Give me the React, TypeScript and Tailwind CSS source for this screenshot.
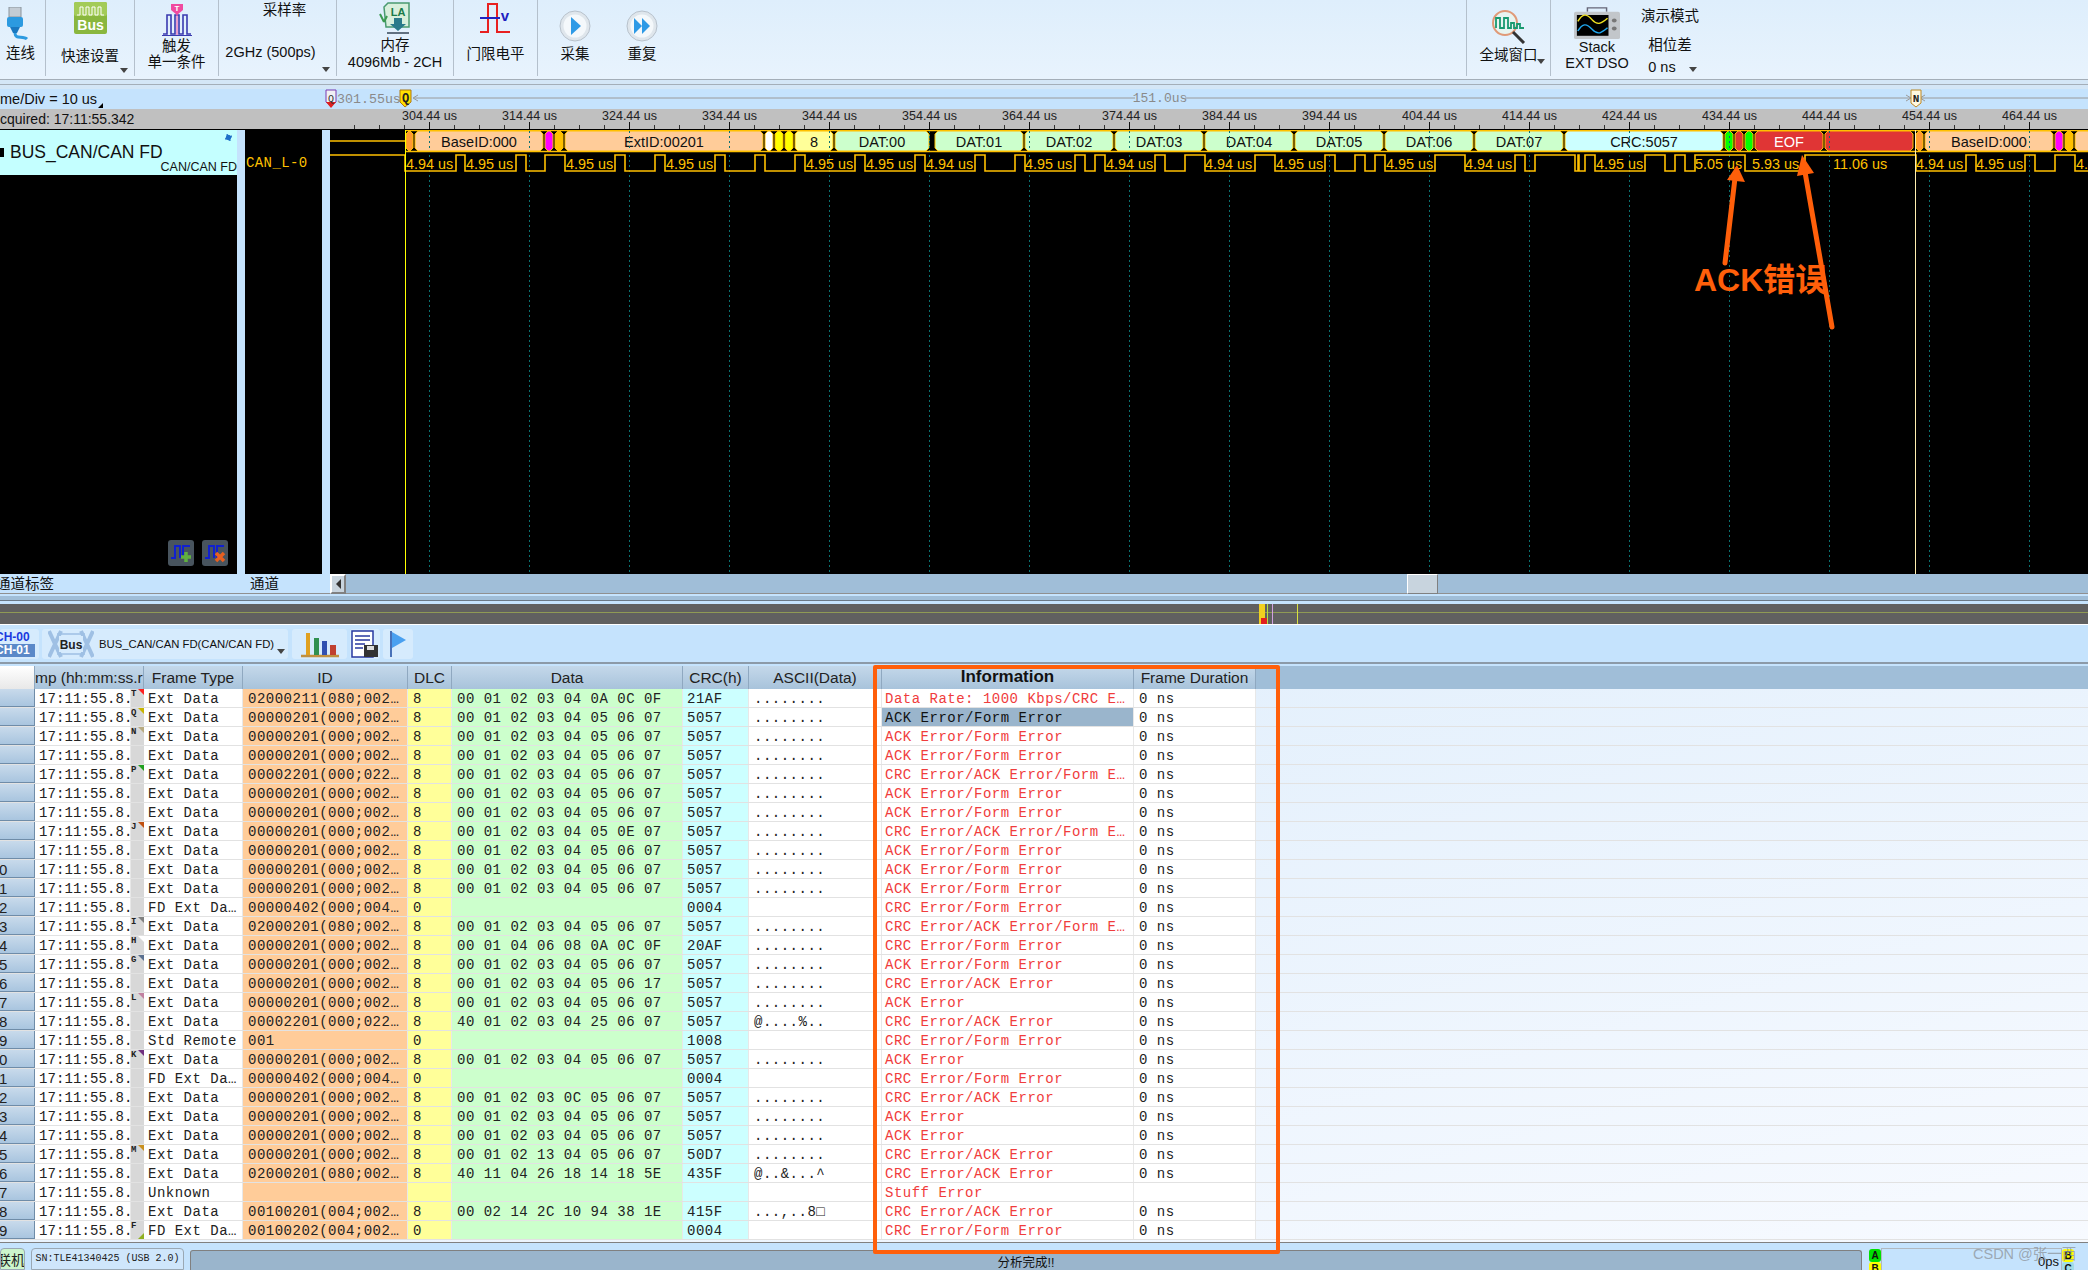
const sans = "font-['Liberation_Sans','Noto_Sans_CJK_SC',sans-serif]";
const mono = "font-['Liberation_Mono','Noto_Sans_CJK_SC',monospace]";

const A_F = "ACK Error/Form Error";
const C_A_F = "CRC Error/ACK Error/Form E…";
const C_F = "CRC Error/Form Error";
const C_A = "CRC Error/ACK Error";
const ACK = "ACK Error";
const BYTES = "00 01 02 03 04 05 06 07";
const ID1 = "00000201(000;002…";

type Row = {
  type?: string;
  id?: string;
  dlc?: string;
  data?: string;
  crc?: string;
  ascii?: string;
  info: string;
  dur?: string;
  flag?: string;
  flagColor?: string;
};

const rows: Row[] = [
  { id: "02000211(080;002…", data: "00 01 02 03 04 0A 0C 0F", crc: "21AF", info: "Data Rate: 1000 Kbps/CRC E…", flag: "T", flagColor: "border-t-[#ff2020]" },
  { info: A_F, flag: "Q", flagColor: "border-t-[#c8b400]" },
  { info: A_F, flag: "N", flagColor: "border-t-[#b8aa80]" },
  { info: A_F },
  { id: "00002201(000;022…", info: C_A_F, flag: "P", flagColor: "border-t-[#20a020]" },
  { info: A_F },
  { info: A_F },
  { data: "00 01 02 03 04 05 0E 07", info: C_A_F, flag: "J", flagColor: "border-t-[#c05010]" },
  { info: A_F },
  { info: A_F },
  { info: A_F },
  { type: "FD Ext Da…", id: "00000402(000;004…", dlc: "0", data: "", crc: "0004", ascii: "", info: C_F },
  { id: "02000201(080;002…", info: C_A_F, flag: "I", flagColor: "border-t-[#808080]" },
  { data: "00 01 04 06 08 0A 0C 0F", crc: "20AF", info: C_F, flag: "H", flagColor: "border-t-[#ffffff]" },
  { info: A_F, flag: "G", flagColor: "border-t-[#5a7090]" },
  { data: "00 01 02 03 04 05 06 17", info: C_A },
  { info: ACK, flag: "L", flagColor: "border-t-[#c080a0]" },
  { id: "00002201(000;022…", data: "40 01 02 03 04 25 06 07", ascii: "@....%..", info: C_A },
  { type: "Std Remote", id: "001", dlc: "0", data: "", crc: "1008", ascii: "", info: C_F },
  { info: ACK, flag: "K", flagColor: "border-t-[#703080]" },
  { type: "FD Ext Da…", id: "00000402(000;004…", dlc: "0", data: "", crc: "0004", ascii: "", info: C_F },
  { data: "00 01 02 03 0C 05 06 07", info: C_A },
  { info: ACK },
  { info: ACK },
  { data: "00 01 02 13 04 05 06 07", crc: "50D7", info: C_A, flag: "M", flagColor: "border-t-[#c89020]" },
  { id: "02000201(080;002…", data: "40 11 04 26 18 14 18 5E", crc: "435F", ascii: "@..&...^", info: C_A },
  { type: "Unknown", id: "", dlc: "", data: "", crc: "", ascii: "", info: "Stuff Error", dur: "" },
  { id: "00100201(004;002…", data: "00 02 14 2C 10 94 38 1E", crc: "415F", ascii: "...,..8□", info: C_A },
  { type: "FD Ext Da…", id: "00100202(004;002…", dlc: "0", data: "", crc: "0004", ascii: "", info: C_F, flag: "F" },
];

// decode bar, page coordinates
const segments = [
  { x1: 406, x2: 413, fill: "#ff9933" },
  { x1: 415, x2: 543, fill: "#ffcc99", label: "BaseID:000" },
  { x1: 545, x2: 553, fill: "#ff00ff" },
  { x1: 555, x2: 563, fill: "#ffc000" },
  { x1: 565, x2: 763, fill: "#ffcc99", label: "ExtID:00201" },
  { x1: 765, x2: 773, fill: "#ffffff" },
  { x1: 775, x2: 783, fill: "#ffff00" },
  { x1: 785, x2: 793, fill: "#ffff00" },
  { x1: 795, x2: 833, fill: "#ffff99", label: "8" },
  { x1: 835, x2: 929, fill: "#ccffcc", label: "DAT:00" },
  { x1: 935, x2: 1023, fill: "#ccffcc", label: "DAT:01" },
  { x1: 1025, x2: 1113, fill: "#ccffcc", label: "DAT:02" },
  { x1: 1115, x2: 1203, fill: "#ccffcc", label: "DAT:03" },
  { x1: 1205, x2: 1293, fill: "#ccffcc", label: "DAT:04" },
  { x1: 1295, x2: 1383, fill: "#ccffcc", label: "DAT:05" },
  { x1: 1385, x2: 1473, fill: "#ccffcc", label: "DAT:06" },
  { x1: 1475, x2: 1563, fill: "#ccffcc", label: "DAT:07" },
  { x1: 1565, x2: 1723, fill: "#ccffff", label: "CRC:5057" },
  { x1: 1725, x2: 1733, fill: "#00ff00" },
  { x1: 1735, x2: 1743, fill: "#e03535" },
  { x1: 1745, x2: 1753, fill: "#00ff00" },
  { x1: 1755, x2: 1823, fill: "#e03535", label: "EOF", light: true },
  { x1: 1825, x2: 1913, fill: "#e03535" },
  { x1: 1916, x2: 1923, fill: "#ff9933" },
  { x1: 1925, x2: 2053, fill: "#ffcc99", label: "BaseID:000" },
  { x1: 2055, x2: 2063, fill: "#ff00ff" },
  { x1: 2065, x2: 2073, fill: "#ffc000" },
  { x1: 2075, x2: 2095, fill: "#ffcc99" },
];

const toggles = [
  405, 456, 465, 516, 526, 545, 565, 615, 625, 655, 665, 715, 725, 755, 765, 795, 805, 855, 865, 915, 925, 975, 985,
  1015, 1025, 1075, 1085, 1095, 1105, 1155, 1165, 1185, 1205, 1255, 1275, 1325, 1335, 1355, 1365, 1375, 1385, 1435,
  1465, 1515, 1525, 1535, 1575, 1578, 1579, 1585, 1595, 1645, 1665, 1675, 1685, 1695, 1745, 1805, 1916, 1966, 1976,
  2025, 2035, 2055, 2075,
];

const waveLabels: [number, string][] = [
  [406, "4.94 us"], [466, "4.95 us"], [566, "4.95 us"], [666, "4.95 us"], [806, "4.95 us"], [866, "4.95 us"],
  [926, "4.94 us"], [1025, "4.95 us"], [1106, "4.94 us"], [1205, "4.94 us"], [1276, "4.95 us"], [1386, "4.95 us"],
  [1465, "4.94 us"], [1596, "4.95 us"], [1695, "5.05 us"], [1752, "5.93 us"], [1833, "11.06 us"], [1916, "4.94 us"],
  [1976, "4.95 us"], [2076, "4.95 us"],
];

const grid = Array.from({ length: 17 }, (_, i) => 429.5 + i * 100);
const ticks = Array.from({ length: 68 }, (_, i) => 354.5 + i * 25);

function wavePath() {
  let d = "M330 155 H405";
  let high = true;
  toggles.forEach((x) => {
    d += ` H${x} V${high ? 171 : 155}`;
    high = !high;
  });
  return d + " H2088";
}

function Caret({ className }: { className: string }) {
  return <div className={`absolute w-0 h-0 border-x-[4px] border-x-transparent border-t-[5px] border-t-[#444] ${className}`} />;
}

function UsbIcon() {
  return (
    <svg width="24" height="34" viewBox="0 0 24 34">
      <rect x="4" y="0" width="12" height="10" fill="#c4ccd4" stroke="#8a949c" />
      <rect x="2" y="10" width="16" height="10" rx="2" fill="#2c9ae0" />
      <path d="M5 20 L15 20 L12 26 L8 26 Z" fill="#1a78c0" />
      <path d="M10 26 C10 33 18 28 22 32" stroke="#2c9ae0" strokeWidth="3" fill="none" />
    </svg>
  );
}

function BusIcon() {
  return (
    <svg width="33" height="32" viewBox="0 0 33 32">
      <rect width="33" height="32" rx="2" fill="#8ab73e" />
      <rect width="33" height="14" rx="2" fill="#a3cb58" />
      <path d="M3 13 H6 V5 H9 V13 H12 V5 H15 V13 H18 V5 H21 V13 H24 V5 H27 V13 H30" stroke="#fff" strokeWidth="1" fill="none" />
      <text x="16.5" y="28" textAnchor="middle" fontSize="14" fontWeight="700" fill="#fff" fontFamily="Liberation Sans">Bus</text>
    </svg>
  );
}

function TriggerIcon() {
  return (
    <svg width="30" height="33" viewBox="0 0 30 33">
      <path d="M1 30 H5 V11 H9 V30 H13 V11 H17 V30 H21 V11 H25 V30 H29" stroke="#3a3ab0" strokeWidth="1.6" fill="none" />
      <path d="M0 31.5 H30" stroke="#3a3ab0" strokeWidth="1" />
      <path d="M9 0 H21 V6 L15 11 L9 6 Z" fill="#f04aa0" />
      <path d="M15 10 V31" stroke="#f04aa0" strokeWidth="1" />
      <text x="15" y="7" textAnchor="middle" fontSize="8" fontWeight="700" fill="#fff" fontFamily="Liberation Sans">T</text>
    </svg>
  );
}

function MemoryIcon() {
  return (
    <svg width="32" height="33" viewBox="0 0 32 33">
      <path d="M5 5 L9 1 H30 V25 H7 Z" fill="#d8efdc" stroke="#4a9a70" strokeWidth="1.5" />
      <path d="M1 12 L5 20 M5 20 L8 14" stroke="#3a9a50" strokeWidth="2" fill="none" />
      <text x="19" y="14" textAnchor="middle" fontSize="11" fontWeight="700" fill="#1a7a4a" fontFamily="Liberation Sans">LA</text>
      <path d="M15 16 H23 V22 H27 L19 29 L11 22 H15 Z" fill="#2a7a8a" />
      <path d="M8 31 H30" stroke="#607080" strokeWidth="2" />
    </svg>
  );
}

function ThresholdIcon() {
  return (
    <svg width="32" height="32" viewBox="0 0 32 32">
      <path d="M0 30 H8 V2 H17 V30 H30" stroke="#e82020" strokeWidth="2" fill="none" />
      <path d="M0 16 H20" stroke="#2020c0" strokeWidth="2" />
      <text x="25" y="19" textAnchor="middle" fontSize="15" fontWeight="700" fill="#2020c0" fontFamily="Liberation Sans">v</text>
    </svg>
  );
}

function PlayIcon({ double }: { double?: boolean }) {
  return (
    <svg width="32" height="32" viewBox="0 0 32 32">
      <circle cx="16" cy="16" r="15" fill="#dfe6ec" stroke="#b8c2cc" />
      <circle cx="16" cy="16" r="11.5" fill="#f4f8fb" />
      {double ? (
        <path d="M8 8 L16 16 L8 24 Z M16 8 L24 16 L16 24 Z" fill="#2e9ae6" />
      ) : (
        <path d="M12 7 L22 16 L12 25 Z" fill="#2e9ae6" />
      )}
    </svg>
  );
}

function ZoomIcon() {
  return (
    <svg width="34" height="34" viewBox="0 0 34 34">
      <circle cx="13" cy="13" r="12" fill="#e8f4f0" stroke="#e09a78" strokeWidth="2" />
      <path d="M4 18 V8 H8 V18 H12 V8 H16 V18 H19 V13 H22 V18 H25 V14 H28 V18 H32" stroke="#1a9a70" strokeWidth="1.8" fill="none" />
      <path d="M21 22 L32 33" stroke="#333" strokeWidth="3" />
    </svg>
  );
}

function StackIcon() {
  return (
    <svg width="46" height="32" viewBox="0 0 48 40" preserveAspectRatio="none">
      <path d="M14 6 V1 H34 V6" stroke="#667" strokeWidth="1.5" fill="none" />
      <rect x="0" y="6" width="48" height="34" rx="2" fill="#c2c6ca" />
      <rect x="3" y="10" width="33" height="26" fill="#000" />
      <path d="M4 18 C9 8 13 8 19 16 C25 24 29 20 35 14" stroke="#f0e020" strokeWidth="1.6" fill="none" />
      <path d="M4 30 C9 20 13 20 19 28 C25 36 29 32 35 26" stroke="#20a8f0" strokeWidth="1.6" fill="none" />
      <circle cx="42" cy="17" r="2.5" fill="#777" />
      <circle cx="42" cy="27" r="2.5" fill="#777" />
    </svg>
  );
}

function Toolbar() {
  const section = "relative h-[76px] shrink-0 flex flex-col items-center border-r border-[#b4c0cc] text-[14.5px] leading-[16px] text-[#111]";
  return (
    <div className="h-[79px] flex bg-gradient-to-b from-[#deeefc] to-[#e8f3fd]">
      <div className={`${section} w-[46px] pt-[7px] pr-[12px]`}>
        <UsbIcon />
        <span className="mt-[4px] ml-[8px] whitespace-nowrap">连线</span>
      </div>
      <div className={`${section} w-[89px] pt-[2px]`}>
        <BusIcon />
        <span className="mt-[14px]">快速设置</span>
        <Caret className="left-[74px] top-[68px]" />
      </div>
      <div className={`${section} w-[84px] pt-[4px]`}>
        <TriggerIcon />
        <span className="mt-[1px]">触发</span>
        <span>单一条件</span>
      </div>
      <div className={`${section} w-[118px] pt-[2px] pr-[14px]`}>
        <span className="ml-[28px]">采样率</span>
        <span className="mt-[26px] whitespace-nowrap">2GHz (500ps)</span>
        <Caret className="left-[103px] top-[67px]" />
      </div>
      <div className={`${section} w-[117px] pt-[2px]`}>
        <MemoryIcon />
        <span className="mt-[2px]">内存</span>
        <span className="mt-[1px] whitespace-nowrap">4096Mb - 2CH</span>
      </div>
      <div className={`${section} w-[84px] pt-[2px]`}>
        <ThresholdIcon />
        <span className="mt-[12px]">门限电平</span>
      </div>
      <div className={`${section} w-[74px] pt-[10px] border-r-0`}>
        <PlayIcon />
        <span className="mt-[4px]">采集</span>
      </div>
      <div className={`${section} w-[60px] pt-[10px] border-r-0`}>
        <PlayIcon double />
        <span className="mt-[4px]">重复</span>
      </div>
      <div className="flex-1 h-[76px] border-r border-[#b4c0cc]" />
      <div className={`${section} w-[84px] pt-[10px]`}>
        <ZoomIcon />
        <span className="mt-[3px] whitespace-nowrap">全域窗口</span>
        <Caret className="left-[70px] top-[59px]" />
      </div>
      <div className={`${section} w-[89px] pt-[7px] pl-[3px] border-r-0`}>
        <StackIcon />
        <span>Stack</span>
        <span className="whitespace-nowrap">EXT DSO</span>
      </div>
      <div className={`${section} w-[60px] pt-[8px] border-r-0`}>
        <span className="whitespace-nowrap">演示模式</span>
        <span className="mt-[13px]">相位差</span>
        <span className="mt-[6px] mr-[16px] whitespace-nowrap">0 ns</span>
        <Caret className="left-[49px] top-[67px]" />
      </div>
      <div className="w-[388px]" />
    </div>
  );
}

function TimeRow() {
  return (
    <div className="relative h-[20px] bg-[#c5e3fd] text-[14.5px] leading-[20px] text-[#111]">
      <span className="whitespace-nowrap">me/Div = 10 us</span>
      <div className="absolute left-[98px] top-[14px] w-0 h-0 border-l-[5px] border-l-transparent border-b-[5px] border-b-black" />
      <svg className="absolute inset-0" width="2088" height="20" viewBox="0 89 2088 20">
        <path d="M414 98 H1910 M1921 98 H2088" stroke="#9a9a9a" />
        <path d="M418 95 L413 98 L418 101 M1906 95 L1911 98 L1906 101 M1925 95 L1920 98 L1925 101" stroke="#9a9a9a" fill="none" />
        <rect x="1135" y="91" width="50" height="14" fill="#c5e3fd" />
        <text x="1160" y="102" textAnchor="middle" fontSize="13" fill="#8a8a8a" fontFamily="Liberation Mono">151.0us</text>
        <text x="337" y="103" fontSize="13.3" fill="#8a8a8a" fontFamily="Liberation Mono">301.55us</text>
        <path d="M326 90 H336 V102 L331 106 L326 102 Z" fill="#f0f0f4" stroke="#7a3ab0" />
        <path d="M326 102 H336 L331 108 Z" fill="#e02020" />
        <text x="331" y="102" textAnchor="middle" fontSize="10" fill="#333" fontFamily="Liberation Mono">Q</text>
        <path d="M400 90 H411 V102 L405 107 L400 102 Z" fill="#ffe000" stroke="#b07810" />
        <text x="405.5" y="102" textAnchor="middle" fontSize="12" fontWeight="700" fill="#222" fontFamily="Liberation Mono">Q</text>
        <path d="M1911 90 H1921 V103 L1916 107 L1911 103 Z" fill="#fff8e0" stroke="#c08820" />
        <text x="1916" y="102" textAnchor="middle" fontSize="11" fontWeight="700" fill="#222" fontFamily="Liberation Mono">N</text>
      </svg>
    </div>
  );
}

function RulerRow() {
  return (
    <div className="flex h-[21px] bg-[#c0c0c0] border-b border-black">
      <div className="w-[330px] shrink-0 text-[14px] leading-[20px] text-[#111] whitespace-nowrap">cquired: 17:11:55.342</div>
      <svg width="1758" height="20" viewBox="330 109 1758 20">
        {ticks.map((x) => (
          <path key={x} d={`M${x} 125 V129`} stroke="#333" />
        ))}
        {grid.map((x, i) => (
          <g key={x}>
            <path d={`M${x} 122 V129`} stroke="#111" />
            <text x={x} y="120" textAnchor="middle" fontSize="12.5" fill="#222" fontFamily="Liberation Sans">
              {(304.44 + i * 10).toFixed(2)} us
            </text>
          </g>
        ))}
      </svg>
    </div>
  );
}

function Waveform() {
  return (
    <svg width="1758" height="444" viewBox="330 130 1758 444" className="bg-black shrink-0">
      {grid.map((x) => (
        <path key={x} d={`M${x} 130 V574`} stroke="#0a7070" strokeDasharray="2 3" />
      ))}
      <path d="M330 141 H405" stroke="#ffc000" strokeWidth="1.5" />
      <path d="M405 130.5 H2088 M405 151.5 H2088" stroke="#ffc000" strokeWidth="1.5" />
      {segments.map((s) => (
        <g key={s.x1}>
          <path
            d={`M${s.x1 + 3} 131 H${s.x2 - 3} L${s.x2} 134 V148 L${s.x2 - 3} 151 H${s.x1 + 3} L${s.x1} 148 V134 Z`}
            fill={s.fill}
            stroke="#ffc000"
          />
          {s.label && (
            <text
              x={(s.x1 + s.x2) / 2}
              y="146.5"
              textAnchor="middle"
              fontSize="14.5"
              fill={s.light ? "#fff" : "#111"}
              fontFamily="Liberation Sans"
            >
              {s.label}
            </text>
          )}
        </g>
      ))}
      {grid.map((x) => (
        <path key={`g${x}`} d={`M${x} 131 V151`} stroke="#0a7070" strokeDasharray="2 3" />
      ))}
      <path d={wavePath()} stroke="#ffc000" strokeWidth="1.6" fill="none" />
      {waveLabels.map(([x, t]) => (
        <text key={x} x={x} y="169" fontSize="14.4" fill="#ffc000" fontFamily="Liberation Sans">
          {t}
        </text>
      ))}
      <path d="M405.5 130 V574" stroke="#ffff00" />
      <path d="M1915.5 130 V574" stroke="#ffefb0" />
    </svg>
  );
}

function PulseButton({ mark }: { mark: "plus" | "cross" }) {
  return (
    <svg width="26" height="26" viewBox="0 0 26 26">
      <rect width="26" height="26" rx="3" fill="#48545e" />
      <path d="M3 18 H7 V6 H12 V18 M15 18 V6 H22" stroke="#1020d0" strokeWidth="2" fill="none" />
      {mark === "plus" ? (
        <path d="M18 12 V22 M13 17 H23" stroke="#60b040" strokeWidth="3.5" />
      ) : (
        <path d="M14 13 L22 21 M22 13 L14 21" stroke="#e86020" strokeWidth="3.5" />
      )}
    </svg>
  );
}

function ChannelPanel() {
  return (
    <div className="flex h-[444px]">
      <div className="relative w-[237px] shrink-0 bg-black">
        <div className="relative h-[45px] bg-[#c4ffff] text-[#111]">
          <div className="absolute left-0 top-[18px] w-[4px] h-[9px] bg-black" />
          <span className="absolute left-[10px] top-[11px] text-[17.5px] leading-[22px] whitespace-nowrap">BUS_CAN/CAN FD</span>
          <span className="absolute right-0 top-[29px] text-[12.5px] leading-[16px] whitespace-nowrap">CAN/CAN FD</span>
          <div className="absolute right-[5px] top-[4px] w-[7px] h-[7px] rounded-full bg-[#1e6fc8] border border-dashed border-[#c4ffff]" />
        </div>
        <div className="absolute left-[168px] top-[410px] flex gap-[8px]">
          <PulseButton mark="plus" />
          <PulseButton mark="cross" />
        </div>
      </div>
      <div className="w-[8px] shrink-0 bg-[#c5e3fd]" />
      <div className={`w-[77px] shrink-0 bg-black pt-[24px] pl-[1px] text-[14px] leading-[18px] tracking-[0.4px] text-[#ffc000] ${mono}`}>
        CAN_L-0
      </div>
      <div className="w-[8px] shrink-0 bg-[#c5e3fd]" />
      <Waveform />
    </div>
  );
}

function ScrollRow() {
  return (
    <>
      <div className="flex h-[20px] bg-[#a0bed8] border-b border-[#909090]">
        <div className="relative w-[330px] shrink-0 bg-[#c5e3fd] text-[14.5px] leading-[20px] text-[#111] overflow-hidden">
          <span className="absolute left-[-4px] whitespace-nowrap">通道标签</span>
          <span className="absolute left-[250px]">通道</span>
        </div>
        <div className="w-[16px] h-[20px] shrink-0 flex items-center justify-center bg-[#c8d4de] border-2 border-t-white border-l-white border-r-[#808080] border-b-[#808080]">
          <div className="w-0 h-0 border-y-[5px] border-y-transparent border-r-[5px] border-r-[#333]" />
        </div>
        <div className="flex-1 pl-[1061px]">
          <div className="w-[31px] h-[20px] bg-[#c8d4de] border border-t-white border-l-white border-r-[#808080] border-b-[#808080]" />
        </div>
      </div>
      <div className="h-[2px] bg-[#c5e3fd]" />
      <div className="h-[5px] bg-[#a0bed8] border-b border-[#6a7886]" />
      <div className="h-[3px] bg-[#c5e3fd]" />
      <div className="relative h-[20px] bg-[#606060]">
        <div className="absolute inset-x-0 top-[8px] h-px bg-[#8f9a55]" />
        <div className="absolute left-[1259px] top-0 w-[6px] h-[20px] bg-[#f0d020]" />
        <div className="absolute left-[1261px] top-[14px] w-[6px] h-[6px] bg-[#e02020]" />
        <div className="absolute left-[1267px] top-0 w-px h-[20px] bg-[#b0e040]" />
        <div className="absolute left-[1272px] top-0 w-px h-[20px] bg-[#d0a0e0]" />
        <div className="absolute left-[1297px] top-0 w-px h-[20px] bg-[#d8e040]" />
      </div>
      <div className="h-px bg-white" />
    </>
  );
}

function TableToolbar() {
  const btn = "h-[30px] shrink-0 rounded-[3px] bg-[#d6ebfd] flex items-center";
  return (
    <div className="h-[39px] bg-[#c5e3fd] border-b-2 border-[#8c9aa8] flex gap-[3px] pt-[4px]">
      <div className={`${btn} w-[39px] flex-col items-start overflow-hidden justify-center text-[12px] leading-[13px] font-bold ${sans}`}>
        <span className="ml-[-5px] text-[#1a3ae0] whitespace-nowrap">CH-00</span>
        <span className="w-[35px] bg-[#5a88c8] text-white whitespace-nowrap overflow-hidden">
          <span className="ml-[-5px] inline-block">CH-01</span>
        </span>
      </div>
      <div className={`${btn} relative w-[246px]`}>
        <svg width="46" height="30" viewBox="0 0 46 30" className="ml-[6px]">
          <path d="M1 2 L13 28 M1 28 L13 2 M33 28 L45 2 M33 2 L45 28" stroke="#9fc0e4" strokeWidth="4" fill="none" />
          <path d="M9 5 H37 M9 25 H37" stroke="#9fc0e4" strokeWidth="1.5" />
          <rect x="11" y="7" width="24" height="16" fill="#d6ebfd" />
          <text x="23" y="20" textAnchor="middle" fontSize="12" fontWeight="700" fill="#222" fontFamily="Liberation Sans">Bus</text>
        </svg>
        <span className="ml-[5px] text-[11.3px] text-[#111] whitespace-nowrap">BUS_CAN/CAN FD(CAN/CAN FD)</span>
        <Caret className="left-[235px] top-[20px]" />
      </div>
      <div className={`${btn} w-[55px] ml-[1px] justify-center`}>
        <svg width="40" height="30" viewBox="0 0 40 30">
          <path d="M1 27 H39" stroke="#c09040" strokeWidth="2.5" />
          <rect x="6" y="4" width="4" height="22" fill="#e0a020" />
          <rect x="14" y="9" width="5" height="17" fill="#309050" />
          <rect x="22" y="12" width="5" height="14" fill="#3050b0" />
          <rect x="30" y="16" width="6" height="10" fill="#c04030" />
        </svg>
      </div>
      <div className={`${btn} w-[30px] justify-center`}>
        <svg width="28" height="28" viewBox="0 0 28 28">
          <rect x="1" y="1" width="21" height="26" fill="#fff" stroke="#2838a0" strokeWidth="1.5" />
          <path d="M4 6 H19 M4 10 H19 M4 14 H14 M4 18 H12" stroke="#2838a0" strokeWidth="1.5" />
          <rect x="13" y="15" width="14" height="12" fill="#333" />
          <rect x="16" y="16" width="7" height="4" fill="#ddd" />
        </svg>
      </div>
      <div className={`${btn} w-[30px] justify-center`}>
        <svg width="20" height="28" viewBox="0 0 20 28">
          <path d="M3 1 V27" stroke="#1848a0" strokeWidth="1.5" />
          <path d="M4 2 L18 10 L4 18 Z" fill="#4aa0f0" />
        </svg>
      </div>
    </div>
  );
}

const cols = {
  time: "w-[96px]",
  flag: "w-[13px]",
  type: "w-[99px]",
  id: "w-[165px]",
  dlc: "w-[44px]",
  data: "w-[231px]",
  crc: "w-[66px]",
  ascii: "w-[133px]",
  info: "w-[252px]",
  dur: "w-[122px]",
};

function HeaderCell({ w, children, bold }: { w: string; children: string; bold?: boolean }) {
  return (
    <div
      className={`${w} shrink-0 overflow-hidden whitespace-nowrap border-r border-[#8fa8c0] text-center ${
        bold ? "text-[17px] font-bold text-[#111] leading-[21px]" : "text-[15.5px] text-[#222] leading-[23px]"
      }`}
    >
      {children}
    </div>
  );
}

function Cell({ w, bg, className, children }: { w: string; bg: string; className?: string; children?: React.ReactNode }) {
  return (
    <div className={`${w} ${bg} shrink-0 overflow-hidden whitespace-nowrap border-r border-[#e8e8e8] ${className ?? ""}`}>
      {children}
    </div>
  );
}

function TableRow({ row, index }: { row: Row; index: number }) {
  const selected = index === 1;
  const num = index + 1;
  return (
    <div className={`flex h-[19px] shrink-0 border-b border-[#e2e2e2] text-[14px] leading-[20px] tracking-[0.5px] text-[#222] ${mono}`}>
      <div className={`w-[35px] shrink-0 bg-gradient-to-b from-[#c8daeb] to-[#a9c5df] border-r border-b border-[#6f8ca8] text-[15px] leading-[19px] tracking-normal overflow-hidden ${sans}`}>
        <span className="ml-[-1px] inline-block">{num >= 10 ? num % 10 : ""}</span>
      </div>
      <Cell w={cols.time} bg="bg-white" className="pl-[4px] tracking-[0.1px]">17:11:55.8.</Cell>
      <div className={`${cols.flag} relative shrink-0 bg-[#d8d8d8] overflow-hidden`}>
        {row.flag && <span className="absolute left-0 top-[-2px] text-[9px] leading-[14px] tracking-normal font-bold">{row.flag}</span>}
        {row.flagColor && <div className={`absolute right-0 top-0 w-0 h-0 border-l-[6px] border-l-transparent border-t-[6px] ${row.flagColor}`} />}
        {row.flag === "F" && <div className="absolute right-0 bottom-0 w-0 h-0 border-l-[6px] border-l-transparent border-b-[6px] border-b-[#90b020]" />}
      </div>
      <Cell w={cols.type} bg="bg-white" className="pl-[4px]">{row.type ?? "Ext Data"}</Cell>
      <Cell w={cols.id} bg="bg-[#ffcc99]" className="pl-[5px]">{row.id ?? ID1}</Cell>
      <Cell w={cols.dlc} bg="bg-[#ffff99]" className="pl-[5px]">{row.dlc ?? "8"}</Cell>
      <Cell w={cols.data} bg="bg-[#ccffcc]" className="pl-[5px]">{row.data ?? BYTES}</Cell>
      <Cell w={cols.crc} bg="bg-[#ccffff]" className="pl-[4px]">{row.crc ?? "5057"}</Cell>
      <Cell w={cols.ascii} bg="bg-white" className="pl-[5px]">{row.ascii ?? "........"}</Cell>
      <Cell
        w={cols.info}
        bg={selected ? "bg-[#9ab5cc]" : "bg-white"}
        className={`pl-[3px] ${selected ? "text-[#111]" : "text-[#f03c3c]"}`}
      >
        {row.info}
      </Cell>
      <Cell w={cols.dur} bg="bg-white" className="pl-[5px]">{row.dur ?? "0 ns"}</Cell>
    </div>
  );
}

function DataTable() {
  return (
    <div className="flex-1 flex flex-col bg-gradient-to-br from-[#dcecfb] to-[#f7faff]">
      <div className="flex h-[23px] bg-[#a0bed8] shrink-0">
        <div className="w-[35px] shrink-0 bg-gradient-to-b from-white to-[#e8e8e8] border-r border-[#8fa8c0]" />
        <div className="flex bg-gradient-to-b from-[#c4d8ea] to-[#a8c3db]">
          <div className="w-[109px] shrink-0 overflow-hidden whitespace-nowrap border-r border-[#8fa8c0] text-[15.5px] leading-[23px] text-[#222]">mp (hh:mm:ss.r</div>
          <HeaderCell w={cols.type}>Frame Type</HeaderCell>
          <HeaderCell w={cols.id}>ID</HeaderCell>
          <HeaderCell w={cols.dlc}>DLC</HeaderCell>
          <HeaderCell w={cols.data}>Data</HeaderCell>
          <HeaderCell w={cols.crc}>CRC(h)</HeaderCell>
          <HeaderCell w={cols.ascii}>ASCII(Data)</HeaderCell>
          <HeaderCell w={cols.info} bold>Information</HeaderCell>
          <HeaderCell w={cols.dur}>Frame Duration</HeaderCell>
        </div>
      </div>
      {rows.map((row, i) => (
        <TableRow key={i} row={row} index={i} />
      ))}
    </div>
  );
}

function StatusBar() {
  return (
    <div className="relative h-[28px] bg-[#c5e3fd] border-t border-[#808080] flex items-end gap-[6px] overflow-hidden">
      <div className="w-[25px] h-[22px] rounded-t-[4px] border border-[#9aa8b4] bg-[#ccf5cc] overflow-hidden text-[14px] leading-[22px] text-[#222] whitespace-nowrap">
        <span className="ml-[-4px] inline-block">联机</span>
      </div>
      <div className={`w-[153px] h-[22px] rounded-t-[4px] border border-[#9aa8b4] bg-[#cfe6fb] text-[10px] leading-[20px] text-[#222] text-center whitespace-nowrap ${mono}`}>
        SN:TLE41340425 (USB 2.0)
      </div>
      <div className="w-[1672px] h-[20px] rounded-t-[3px] border border-[#808080] border-b-0 bg-[#9ab5cc] text-center text-[12.5px] leading-[24px] text-[#111] shrink-0">
        分析完成!!
      </div>
      <div className="absolute left-[1869px] top-[6px] w-[12px] h-[13px] rounded-[3px] bg-[#00e000] text-[10px] leading-[13px] font-bold text-center text-[#111]">A</div>
      <div className="absolute left-[1869px] top-[19px] w-[12px] h-[13px] rounded-[3px] bg-[#ffff00] text-[10px] leading-[13px] font-bold text-center text-[#111]">B</div>
      <div className="absolute left-[1881px] top-[5px] w-[181px] h-[30px] border border-[#b0b8c0]" />
      <span className="absolute left-[2038px] top-[11px] text-[13px] leading-[16px] text-[#111]">0ps</span>
      <div className="absolute left-[2062px] top-[6px] w-[12px] h-[13px] rounded-[3px] bg-[#ffff00] text-[10px] leading-[13px] font-bold text-center text-[#111]">B</div>
      <div className="absolute left-[2062px] top-[19px] w-[12px] h-[13px] rounded-[3px] bg-[#a0dce8] text-[10px] leading-[13px] font-bold text-center text-[#111]">C</div>
      <span className="absolute left-[1973px] top-[2px] text-[14.5px] leading-[18px] text-[#9098a0]/80 whitespace-nowrap">CSDN @张一西</span>
    </div>
  );
}

function Annotations() {
  return (
    <>
      <svg className="absolute inset-0 pointer-events-none" width="2088" height="1270" viewBox="0 0 2088 1270">
        <path d="M1725 263 L1735 178" stroke="#ff5f0a" strokeWidth="5" strokeLinecap="round" />
        <path d="M1737 165 L1745 182 L1727 180 Z" fill="#ff5f0a" />
        <path d="M1832 327 L1805 172" stroke="#ff5f0a" strokeWidth="5" strokeLinecap="round" />
        <path d="M1802 155 L1814 173 L1797 176 Z" fill="#ff5f0a" />
      </svg>
      <span className="absolute left-[1694px] top-[260px] text-[32px] leading-[40px] font-bold text-[#ff5f0a] whitespace-nowrap">ACK错误</span>
      <div className="absolute left-[873px] top-[665px] w-[407px] h-[589px] border-4 border-[#ff5f0a] rounded-[2px] pointer-events-none" />
    </>
  );
}

export default function App() {
  return (
    <div className={`relative w-[2088px] h-[1270px] flex flex-col overflow-hidden bg-[#c5e3fd] [&>*]:shrink-0 ${sans}`}>
      <Toolbar />
      <div className="h-[5px] bg-[#d4e6f6] border-t border-[#a4aeb8]" />
      <div className="h-[5px] bg-[#d4e6f6] border-t border-[#a4aeb8]" />
      <TimeRow />
      <RulerRow />
      <ChannelPanel />
      <ScrollRow />
      <TableToolbar />
      <div className="h-[2px] bg-[#c5e3fd]" />
      <DataTable />
      <StatusBar />
      <Annotations />
    </div>
  );
}
